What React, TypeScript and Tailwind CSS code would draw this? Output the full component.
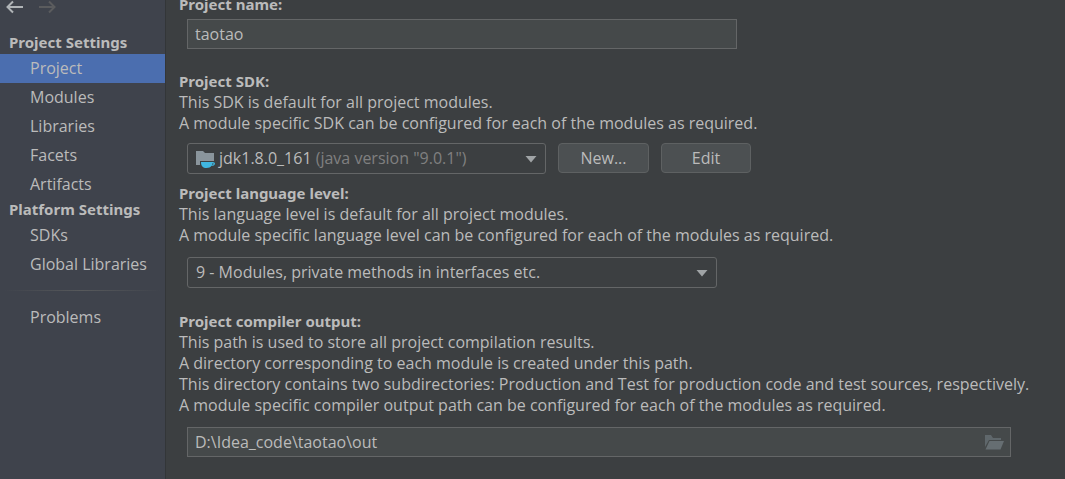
import type { ReactNode } from "react";

const settingsGroups = [
  { title: "Project Settings", items: ["Project", "Modules", "Libraries", "Facets", "Artifacts"] },
  { title: "Platform Settings", items: ["SDKs", "Global Libraries"] },
];

function NavItem({ label, active = false }: { label: string; active?: boolean }) {
  return (
    <a
      href="#"
      aria-current={active ? "page" : undefined}
      className={active ? "flex h-[29px] items-center bg-[#4b6eaf] pl-[30px]" : "flex h-[29px] items-center pl-[30px]"}
    >
      {label}
    </a>
  );
}

function Caret() {
  return (
    <svg width="12" height="8" viewBox="0 0 12 8" aria-hidden="true">
      <path d="M0.5 1h11L6 7.5z" fill="#a0a4a6" />
    </svg>
  );
}

function SdkIcon() {
  return (
    <svg width="20" height="18" viewBox="0 0 20 18" aria-hidden="true">
      <path d="M0 1h7l2 2h9v8H4v4H0z" fill="#8a959c" />
      <path fillRule="evenodd" d="M5 12h11.500c3.500-.2 3.500 4-1 3.800C14.500 17.500 13 18 10.500 18 7 18 5 16 5 12zm11.500 1.200l-.5 1.500c2 0 2.200-1.500.5-1.500z" fill="#40b6e0" />
    </svg>
  );
}

function Section({ title, lines, htmlFor }: { title: string; lines: string[]; htmlFor: string }) {
  return (
    <div>
      <label htmlFor={htmlFor} className="block font-['Noto_Sans',sans-serif] text-[15px] leading-[21px] font-bold">{title}</label>
      {lines.map((line) => <p key={line}>{line}</p>)}
    </div>
  );
}

function SelectBox({ width, children, overlay }: { width: string; children: ReactNode; overlay?: ReactNode }) {
  return (
    <div className={`grid h-[31px] rounded-[3px] border border-[#646667] ${width}`}>
      {children}
      <div className="pointer-events-none col-start-1 row-start-1 flex items-center pr-2" aria-hidden="true">
        {overlay}
        <span className="ml-auto"><Caret /></span>
      </div>
    </div>
  );
}

export default function App() {
  return (
    <div className="flex min-h-screen overflow-hidden bg-[#3c3f41] font-['Open_Sans',sans-serif] text-[16px] leading-[21px] text-[#bbbbbb]">
      <aside className="w-[166px] shrink-0 border-r border-[#333638] bg-[#3f434c]">
        <div className="flex h-8 gap-4 pl-1.5">
          <button type="button" aria-label="Back" className="h-3.5">
            <svg width="17" height="14" viewBox="0 0 17 14" fill="none" stroke="#b0b4b7" strokeWidth="2">
              <path d="M17 7H2M7 1.500L1.500 7L7 12.500" />
            </svg>
          </button>
          <button type="button" aria-label="Forward" disabled className="h-3.5">
            <svg width="17" height="14" viewBox="0 0 17 14" fill="none" stroke="#5b5c5e" strokeWidth="2">
              <path d="M0 7H15M10 1.500L15.500 7L10 12.500" />
            </svg>
          </button>
        </div>
        <nav aria-label="Settings">
          {settingsGroups.map((group) => (
            <div key={group.title}>
              <h2 className="h-[22px] pl-[9px] font-['Noto_Sans',sans-serif] text-[15px] leading-[21px] font-bold">{group.title}</h2>
              {group.items.map((item) => <NavItem key={item} label={item} active={item === "Project"} />)}
            </div>
          ))}
          <div className="mx-1 mt-[11px] mb-3 h-px bg-linear-to-r from-transparent via-[#57595b] to-transparent" />
          <NavItem label="Problems" />
        </nav>
      </aside>

      <main className="min-w-0 flex-1 pl-[13px]">
        <div className="-mt-1.5">
          <Section title="Project name:" lines={[]} htmlFor="name" />
        </div>
        <div className="mt-1 mr-[54px] ml-2">
          <input id="name" defaultValue="taotao" className="block h-[30px] w-full max-w-[550px] border border-[#646667] bg-[#45494a] px-[7px]" />
        </div>

        <div className="mt-[22px]">
          <Section
            title="Project SDK:"
            lines={["This SDK is default for all project modules.", "A module specific SDK can be configured for each of the modules as required."]}
            htmlFor="sdk"
          />
        </div>
        <div className="mt-[9px] ml-2 flex items-start gap-3">
          <SelectBox
            width="w-[359px]"
            overlay={
              <span className="flex items-center pl-2">
                <SdkIcon />
                <span className="ml-[3px] whitespace-pre">jdk1.8.0_161 <span className="text-[#808080]">(java version "9.0.1")</span></span>
              </span>
            }
          >
            <select id="sdk" className="col-start-1 row-start-1 appearance-none bg-transparent text-transparent">
              <option>jdk1.8.0_161</option>
            </select>
          </SelectBox>
          <button type="button" className="h-[30px] w-[91px] rounded-[4px] border border-[#5e6162] bg-[#4c5052]">New...</button>
          <button type="button" className="h-[30px] w-[90px] rounded-[4px] border border-[#5e6162] bg-[#4c5052]">Edit</button>
        </div>

        <div className="mt-[9px]">
          <Section
            title="Project language level:"
            lines={["This language level is default for all project modules.", "A module specific language level can be configured for each of the modules as required."]}
            htmlFor="level"
          />
        </div>
        <div className="mt-[11px] mr-[54px] ml-2">
          <SelectBox width="w-full max-w-[530px]">
            <select id="level" className="col-start-1 row-start-1 appearance-none bg-transparent pl-2">
              <option>9 - Modules, private methods in interfaces etc.</option>
            </select>
          </SelectBox>
        </div>

        <div className="mt-[23px]">
          <Section
            title="Project compiler output:"
            lines={[
              "This path is used to store all project compilation results.",
              "A directory corresponding to each module is created under this path.",
              "This directory contains two subdirectories: Production and Test for production code and test sources, respectively.",
              "A module specific compiler output path can be configured for each of the modules as required.",
            ]}
            htmlFor="output"
          />
        </div>
        <div className="mt-[11px] mr-[54px] ml-2 flex h-[30px] items-center border border-[#646667] bg-[#45494a] pr-1.5">
          <input id="output" defaultValue="D:\Idea_code\taotao\out" className="min-w-0 flex-1 bg-transparent px-[7px]" />
          <button type="button" aria-label="Browse">
            <svg width="20" height="15" viewBox="0 0 20 15" aria-hidden="true">
              <path d="M1 0h6l2 3h8v2H5L1 12z" fill="#5f676b" />
              <path d="M5.500 6H20L16.500 14.500H1.500z" fill="#666e72" />
            </svg>
          </button>
        </div>
      </main>
    </div>
  );
}
